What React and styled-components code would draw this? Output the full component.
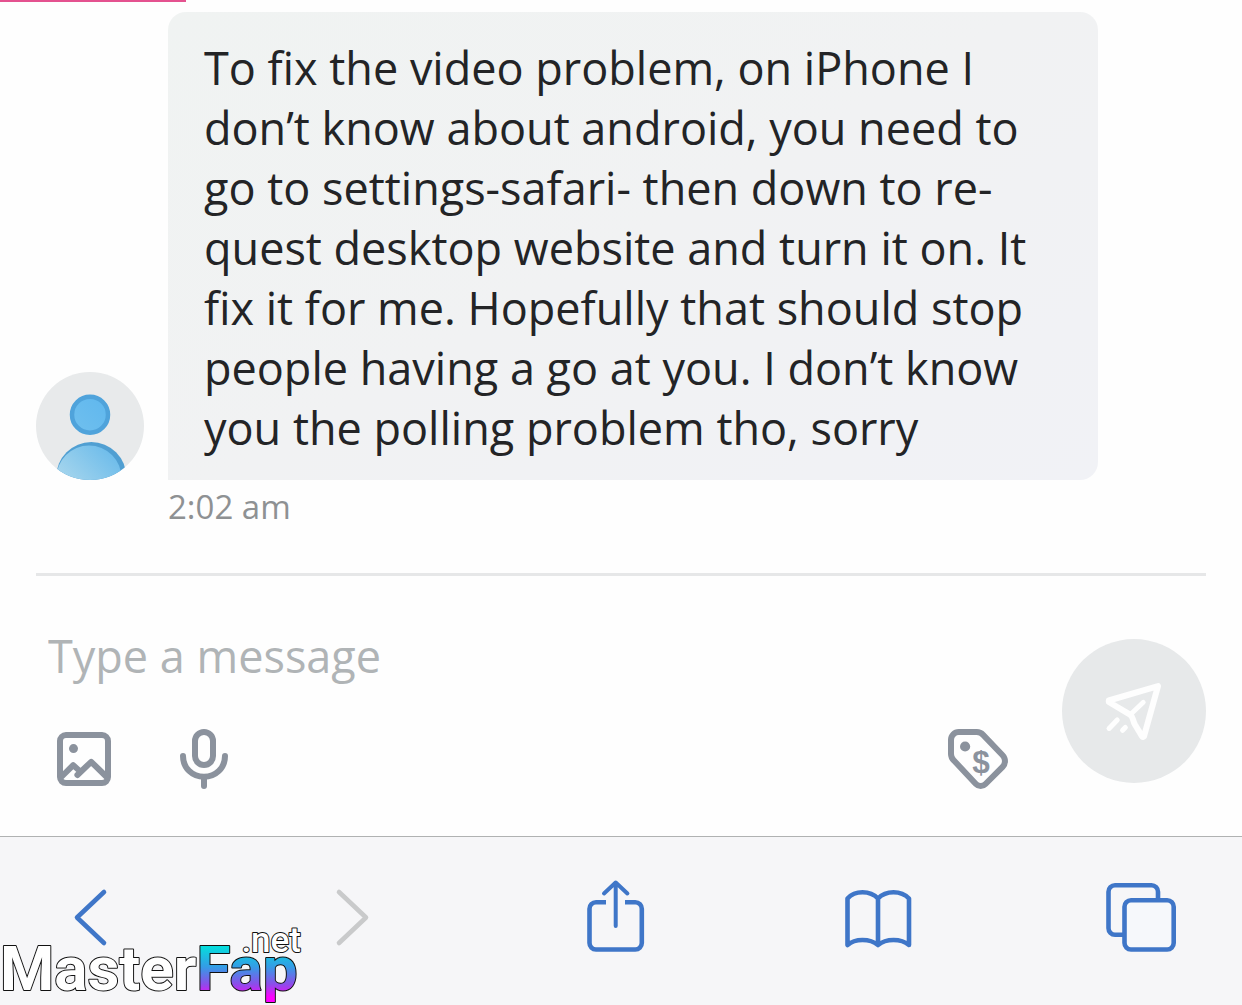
import { useState } from 'react';
import styled, { createGlobalStyle } from 'styled-components';

const GlobalStyle = createGlobalStyle`
  * {
    box-sizing: border-box;
  }

  body {
    margin: 0;
    background: #fefefe;
    font-family: 'Open Sans', 'Noto Sans', sans-serif;
    color: #232426;
  }
`;

const Page = styled.div`
  min-height: 100vh;
  display: flex;
  flex-direction: column;
`;

const LoadingBar = styled.div`
  width: 15%;
  height: 2px;
  background: #e4528f;
`;

const Chat = styled.main`
  flex: 1;
  padding: 10px 36px 0;
`;

const MessageRow = styled.div`
  display: grid;
  grid-template-columns: 108px minmax(0, 930px);
  column-gap: 24px;
  align-items: end;
`;

const Avatar = styled.svg`
  width: 108px;
  height: 108px;
  border-radius: 50%;
`;

const Bubble = styled.p`
  margin: 0;
  padding: 26px 36px 22px;
  border-radius: 18px 18px 18px 0;
  background: linear-gradient(150deg, #f0f3f2 0%, #f1f2f3 50%, #f1f2f6 100%);
  font-size: 45px;
  line-height: 60px;
`;

const Time = styled.time`
  grid-column: 2;
  padding-top: 3px;
  font-size: 33px;
  line-height: 48px;
  color: #8e9193;
`;

const Composer = styled.form`
  display: flex;
  align-items: center;
  gap: 48px;
  margin-top: 42px;
  padding: 50px 0 40px 12px;
  border-top: 3px solid #e6e7e8;
`;

const ComposerFields = styled.div`
  flex: 1;
  min-width: 0;
  display: flex;
  flex-direction: column;
  gap: 38px;
`;

const MessageInput = styled.input`
  width: 100%;
  height: 60px;
  padding: 0;
  border: 0;
  outline: 0;
  background: transparent;
  font: inherit;
  font-size: 45px;
  line-height: 60px;
  color: inherit;

  &::placeholder {
    color: #b0b4b6;
    opacity: 1;
  }
`;

const Tools = styled.div`
  display: flex;
  gap: 48px;
`;

const IconButton = styled.button`
  display: flex;
  padding: 0;
  border: 0;
  background: none;
  color: ${({ $color }) => $color || '#8b929d'};
  cursor: pointer;
  margin-left: ${({ $end }) => ($end ? 'auto' : '0')};

  svg {
    width: ${({ $size }) => $size || 72}px;
    height: ${({ $size }) => $size || 72}px;
  }
`;

const SendButton = styled.button`
  display: flex;
  align-items: center;
  justify-content: center;
  width: 144px;
  height: 144px;
  padding: 0;
  border: 0;
  border-radius: 50%;
  background: #e7e9ea;
  color: #fefefe;

  svg {
    width: 72px;
    height: 72px;
  }
`;

const BrowserBar = styled.nav`
  position: relative;
  display: flex;
  justify-content: space-between;
  height: 169px;
  padding: 39px 61px 0 50px;
  border-top: 1px solid #b0b2b2;
  background: #f6f6f8;
`;

const WatermarkSvg = styled.svg`
  position: absolute;
  left: 0;
  bottom: 0;
  width: 304px;
  height: 85px;
  font-family: Roboto, 'Liberation Sans', sans-serif;
  pointer-events: none;

  text {
    fill: #fff;
    stroke: #111;
    stroke-width: 2px;
    stroke-linejoin: round;
    paint-order: stroke;
  }
`;

const WatermarkAccent = styled.tspan`
  fill: url(#accent);
`;

const stroke = {
  fill: 'none',
  stroke: 'currentColor',
  strokeLinecap: 'round',
  strokeLinejoin: 'round',
  'aria-hidden': true,
};

const Icon = ({ children }) => (
  <svg viewBox="0 0 24 24" strokeWidth="2" {...stroke}>{children}</svg>
);

const BarIcon = ({ children }) => (
  <svg viewBox="0 0 80 80" strokeWidth="4.6" {...stroke}>{children}</svg>
);

const UserAvatar = () => (
  <Avatar viewBox="0 0 108 108" role="img" aria-label="User">
    <defs>
      <linearGradient id="head" x1="0" y1="1" x2="1" y2="0">
        <stop offset="0" stopColor="#70c0ee" />
        <stop offset="1" stopColor="#5fb7ee" />
      </linearGradient>
      <linearGradient id="body" x1="0" y1="1" x2="1" y2="0">
        <stop offset="0.3" stopColor="#a5d5ed" />
        <stop offset="1" stopColor="#62b7ea" />
      </linearGradient>
    </defs>
    <rect width="108" height="108" fill="#e8eaeb" />
    <circle cx="54" cy="42.7" r="18" fill="url(#head)" stroke="#4fa3db" strokeWidth="4.5" />
    <circle cx="55.3" cy="105" r="35" fill="#509fd2" />
    <circle cx="53" cy="106" r="32.5" fill="url(#body)" />
  </Avatar>
);

const Watermark = () => (
  <WatermarkSvg viewBox="0 0 304 85">
    <defs>
      <linearGradient id="accent" gradientUnits="userSpaceOnUse" x1="0" y1="24" x2="0" y2="82">
        <stop offset="0" stopColor="#00e5dc" />
        <stop offset="0.4" stopColor="#359be6" />
        <stop offset="0.7" stopColor="#8f4bea" />
        <stop offset="0.92" stopColor="#ff00ff" />
      </linearGradient>
    </defs>
    <text x="0" y="70" fontSize="62" fontWeight="700">
      Master<WatermarkAccent>Fap</WatermarkAccent>
    </text>
    <text x="301" y="32" fontSize="35" fontWeight="500" textAnchor="end">.net</text>
  </WatermarkSvg>
);

const App = () => {
  const [message, setMessage] = useState('');

  return (
    <Page>
      <GlobalStyle />
      <LoadingBar />
      <Chat>
        <MessageRow>
          <UserAvatar />
          <Bubble>
            To fix the video problem, on iPhone I don’t know about android, you need to
            go to settings-safari- then down to re&shy;quest desktop website and turn it
            on. It fix it for me. Hopefully that should stop people having a go at you. I
            don’t know you the polling problem tho, sorry
          </Bubble>
          <Time>2:02 am</Time>
        </MessageRow>
        <Composer onSubmit={(e) => e.preventDefault()}>
          <ComposerFields>
            <MessageInput
              type="text"
              aria-label="Type a message"
              placeholder="Type a message"
              value={message}
              onChange={(e) => setMessage(e.target.value)}
            />
            <Tools>
              <IconButton type="button" aria-label="Add image">
                <Icon>
                  <rect x="4" y="3.7" width="16" height="16" rx="2" />
                  <circle cx="8.5" cy="8.2" r="1.5" fill="currentColor" stroke="none" />
                  <path d="M4.6 17.5 8.4 13.7l2.2 2M9.8 17l4.6-4.4 5 4.9" />
                </Icon>
              </IconButton>
              <IconButton type="button" aria-label="Record voice">
                <Icon>
                  <rect x="9" y="2.7" width="6" height="11" rx="3" />
                  <path d="M5 10.7c0 4 3.1 6.9 7 6.9s7-2.9 7-6.9M12 17.7v3" />
                </Icon>
              </IconButton>
              <IconButton type="button" aria-label="Set price" $end>
                <Icon>
                  <path d="M5.6 2.7h6a3 3 0 0 1 2.1.9l6.5 6.8a2.8 2.8 0 0 1 0 3.9l-5.7 5.7a2.2 2.2 0 0 1-3.2 0l-7.4-7.9A3 3 0 0 1 3 10V5.3A2.6 2.6 0 0 1 5.6 2.7z" />
                  <circle cx="7.7" cy="7.5" r="1.7" fill="currentColor" stroke="none" />
                  <text
                    x="13"
                    y="16.3"
                    textAnchor="middle"
                    fontFamily="Liberation Sans, Arial, sans-serif"
                    fontSize="10.5"
                    fontWeight="700"
                    fill="currentColor"
                    stroke="none"
                  >
                    $
                  </text>
                </Icon>
              </IconButton>
            </Tools>
          </ComposerFields>
          <SendButton type="submit" aria-label="Send" disabled={!message}>
            <Icon>
              <path d="M3.6 8.5 20 3.7l-4.6 16.5a.4.4 0 0 1-.8.1l-2.3-3.8c-.8-1.4-.4-2.4-1.6-3.3L3.6 9z" />
              <path strokeWidth="1.6" d="m10.9 13.1 4.2-4" />
              <path strokeWidth="1.7" d="m6.4 15-2.7 2.8M9.1 17.5l-.9.9" />
            </Icon>
          </SendButton>
        </Composer>
      </Chat>
      <BrowserBar aria-label="Browser">
        <IconButton type="button" aria-label="Back" $size={80} $color="#3f76c8">
          <BarIcon><path d="M54 16 27 41.5 54 67" /></BarIcon>
        </IconButton>
        <IconButton type="button" aria-label="Forward" $size={80} $color="#c9cacb">
          <BarIcon><path d="m26 16 27 25.5L26 67" /></BarIcon>
        </IconButton>
        <IconButton type="button" aria-label="Share" $size={80} $color="#3f76c8">
          <BarIcon>
            <path
              strokeLinecap="butt"
              d="M30 26.3H20a6.5 6.5 0 0 0-6.5 6.5V67a6.5 6.5 0 0 0 6.5 6.5h39.3a6.5 6.5 0 0 0 6.5-6.5V32.8a6.5 6.5 0 0 0-6.5-6.5H49"
            />
            <path strokeWidth="4" d="M39.7 50V6.5M28 17.5l11.7-11 11.7 11" />
          </BarIcon>
        </IconButton>
        <IconButton type="button" aria-label="Bookmarks" $size={80} $color="#3f76c8">
          <BarIcon>
            <path d="M9.5 22.5C17 14.2 32 14.2 40 22.5 48 14.2 63 14.2 71 22.5V69C63 62.3 48 62.3 40 69 32 62.3 17 62.3 9.5 69zM40 22.5V69" />
          </BarIcon>
        </IconButton>
        <IconButton type="button" aria-label="Tabs" $size={80} $color="#3f76c8">
          <BarIcon>
            <rect x="7.5" y="9.3" width="49.5" height="49.5" rx="6.5" />
            <rect x="23.5" y="24.3" width="49.2" height="49.2" rx="6.5" fill="#f6f8fb" />
          </BarIcon>
        </IconButton>
        <Watermark />
      </BrowserBar>
    </Page>
  );
};

export default App;
